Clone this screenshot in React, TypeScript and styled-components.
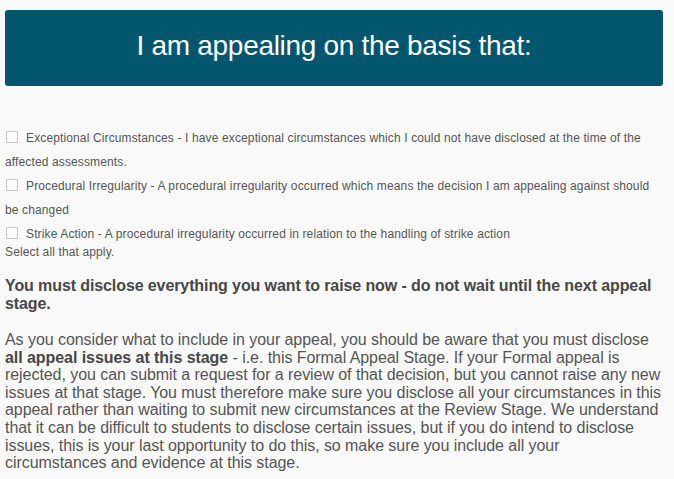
import React from "react";
import styled, { createGlobalStyle } from "styled-components";

const GlobalStyle = createGlobalStyle`
  html, body {
    margin: 0;
    padding: 0;
    background: #f9f9f9;
  }
  body {
    font-family: "Liberation Sans", Arial, sans-serif;
    color: #555555;
  }
`;

const Page = styled.div`
  padding: 10px 11px 0 5px;
`;

const Banner = styled.div`
  height: 76px;
  background: #02566e;
  border-radius: 3px;
  display: flex;
  align-items: center;
  justify-content: center;
`;

const BannerTitle = styled.h1`
  margin: 0 0 4px 0;
  font-size: 28px;
  font-weight: 400;
  color: #ffffff;
  letter-spacing: -0.3px;
`;

const Options = styled.div`
  margin-top: 40px;
  padding-right: 8px;
  font-size: 12px;
  line-height: 24px;
  letter-spacing: 0.13px;
`;

const Option = styled.label`
  display: block;
`;

const Box = styled.span`
  display: inline-block;
  width: 10px;
  height: 10px;
  border: 1px solid #c8c8c8;
  background: #ffffff;
  margin: 0 8px 0 1px;
  vertical-align: -1px;
`;

const Hint = styled.div`
  font-size: 12px;
  line-height: 12px;
  margin-top: 0;
  letter-spacing: 0.13px;
`;

const Warning = styled.h2`
  margin: 19px 0 0 0;
  font-size: 16px;
  line-height: 18px;
  font-weight: 700;
  color: #474747;
  letter-spacing: -0.1px;
`;

const Body = styled.p`
  margin: 18px 0 0 0;
  font-size: 16px;
  line-height: 17.6px;
  color: #555555;
  letter-spacing: -0.06px;
`;

const Strong = styled.b`
  font-weight: 700;
  color: #474747;
`;

const options = [
  "Exceptional Circumstances - I have exceptional circumstances which I could not have disclosed at the time of the affected assessments.",
  "Procedural Irregularity - A procedural irregularity occurred which means the decision I am appealing against should be changed",
  "Strike Action - A procedural irregularity occurred in relation to the handling of strike action",
];

const App = () => {
  return (
    <>
      <GlobalStyle />
      <Page>
        <Banner>
          <BannerTitle>I am appealing on the basis that:</BannerTitle>
        </Banner>
        <Options>
          {options.map((text, index) => (
            <Option key={index}>
              <Box />
              {text}
            </Option>
          ))}
        </Options>
        <Hint>Select all that apply.</Hint>
        <Warning>
          You must disclose everything you want to raise now - do not wait
          until the next appeal stage.
        </Warning>
        <Body>
          As you consider what to include in your appeal, you should be aware
          that you must disclose <Strong>all appeal issues at this stage</Strong>{" "}
          - i.e. this Formal Appeal Stage. If your Formal appeal is rejected,
          you can submit a request for a review of that decision, but you
          cannot raise any new issues at that stage. You must therefore make
          sure you disclose all your circumstances in this appeal rather than
          waiting to submit new circumstances at the Review Stage. We
          understand that it can be difficult to students to disclose certain
          issues, but if you do intend to disclose issues, this is your last
          opportunity to do this, so make sure you include all your
          circumstances and evidence at this stage.
        </Body>
      </Page>
    </>
  );
};

export default App;
